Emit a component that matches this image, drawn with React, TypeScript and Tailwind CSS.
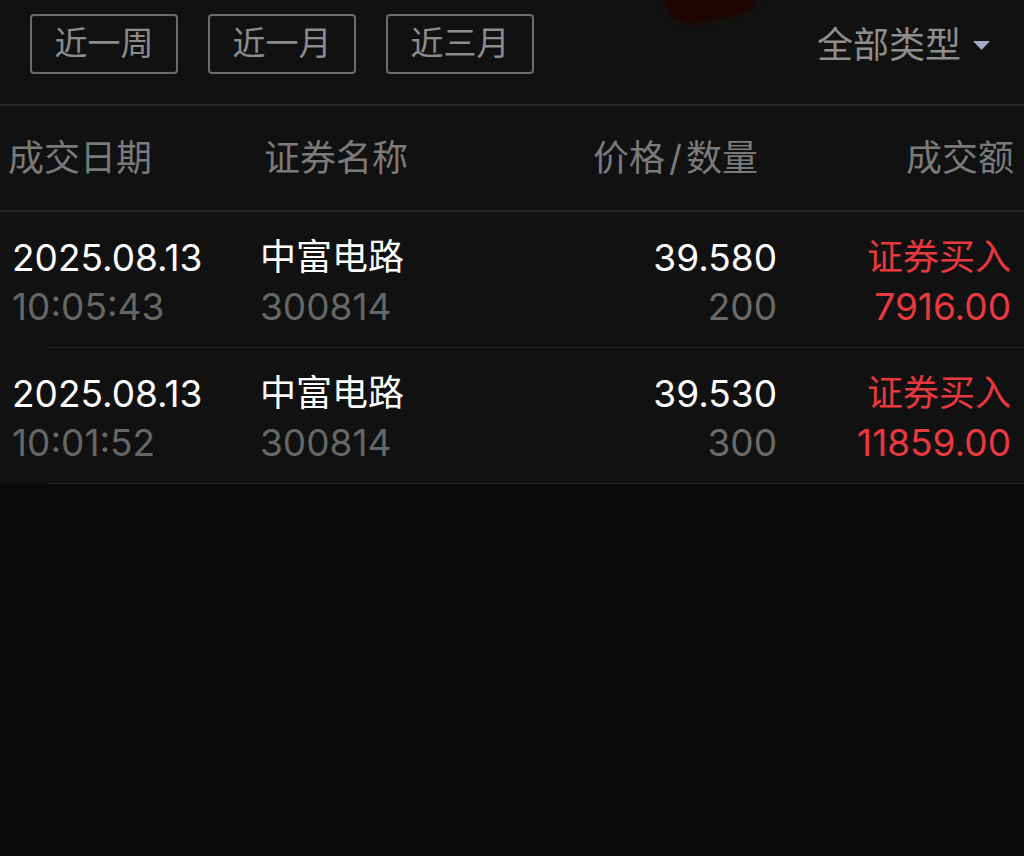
import React from 'react';

const font = { fontFamily: '"Inter", "Noto Sans CJK SC", sans-serif' };

const ranges = ['近一周', '近一月', '近三月'];

const trades = [
  { date: '2025.08.13', time: '10:05:43', name: '中富电路', code: '300814', price: '39.580', qty: '200', type: '证券买入', amount: '7916.00' },
  { date: '2025.08.13', time: '10:01:52', name: '中富电路', code: '300814', price: '39.530', qty: '300', type: '证券买入', amount: '11859.00' },
];

export default function App() {
  return (
    <div className="w-[1024px] h-[856px] bg-[#0a0a0a] overflow-hidden" style={font}>
      {/* filter bar */}
      <div className="relative h-[104px] bg-[#111111] flex items-start pt-[14px] pl-[30px] pr-[34px] overflow-hidden">
        <div className="absolute left-[664px] top-[-34px] w-[96px] h-[54px] rounded-full bg-[#1e0402] blur-[3px] -rotate-12" />
        <div className="flex gap-[30px]">
          {ranges.map((r) => (
            <button
              key={r}
              className="w-[148px] h-[60px] border-2 border-[#6c6c6c] rounded-[4px] text-[33px] text-[#8c8c8c] flex items-center justify-center"
            >
              {r}
            </button>
          ))}
        </div>
        <div className="ml-auto h-[62px] flex items-center gap-[12px] text-[36px] text-[#8e8e8e]">
          <span>全部类型</span>
          <svg width="17" height="9" viewBox="0 0 17 9">
            <path d="M0 0 H17 L8.5 9 Z" fill="#a4a9c6" />
          </svg>
        </div>
      </div>
      <div className="h-[2px] bg-[#262626]" />

      {/* column header */}
      <div className="h-[104px] bg-[#111111] flex items-center text-[36px] text-[#7a7a7a] pl-[8px] pr-[10px]">
        <div className="w-[256px]">成交日期</div>
        <div className="flex-1">证券名称</div>
        <div className="w-[220px] text-right">
          价格<span className="mx-[4px]">/</span>数量
        </div>
        <div className="w-[256px] text-right">成交额</div>
      </div>
      <div className="h-[2px] bg-[#262626]" />

      {/* trade rows */}
      <div className="bg-[#111111]">
        {trades.map((t, i) => (
          <div key={i} className="relative h-[136px] flex items-center pt-[4px] pl-[12px] pr-[13px] text-[37px] leading-[49px]">
            <div className="w-[248px] flex flex-col">
              <span className="text-white">{t.date}</span>
              <span className="text-[#666666]">{t.time}</span>
            </div>
            <div className="flex-1 flex flex-col">
              <span className="text-white text-[36px]">{t.name}</span>
              <span className="text-[#666666]">{t.code}</span>
            </div>
            <div className="w-[240px] flex flex-col items-end">
              <span className="text-white">{t.price}</span>
              <span className="text-[#6a6a6a]">{t.qty}</span>
            </div>
            <div className="w-[234px] flex flex-col items-end text-[#e8393f]">
              <span className="text-[36px]">{t.type}</span>
              <span>{t.amount}</span>
            </div>
            <div className="absolute left-[50px] right-0 bottom-0 h-px bg-[#232323]" />
          </div>
        ))}
      </div>
    </div>
  );
}
